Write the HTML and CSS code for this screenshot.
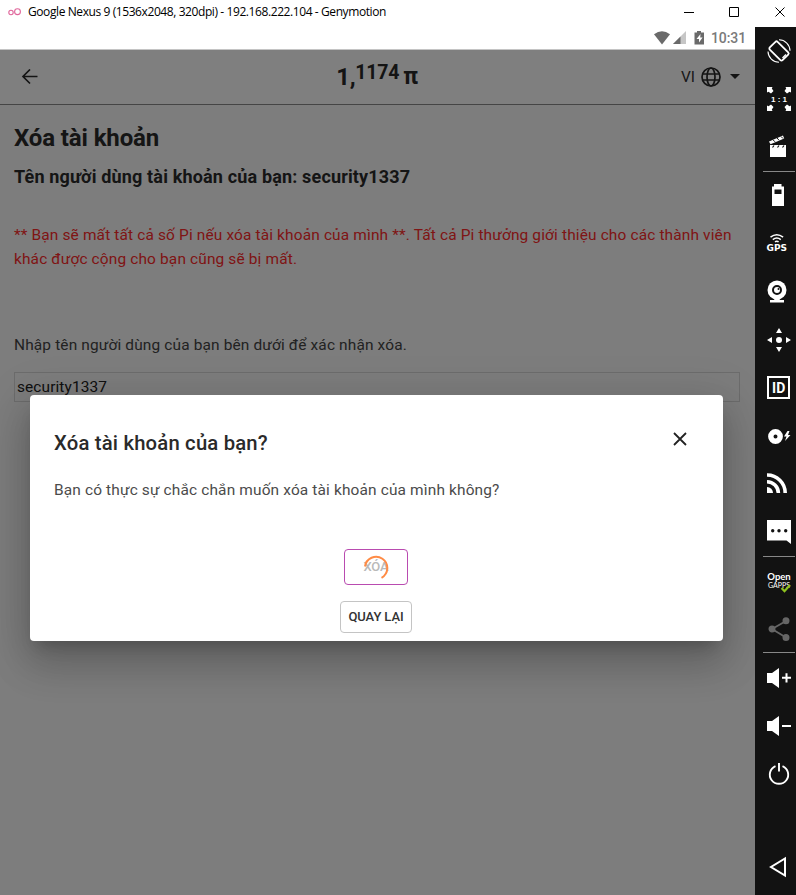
FILE: index.html
```html
<!DOCTYPE html>
<html lang="vi">
<head>
<meta charset="utf-8">
<title>Genymotion</title>
<link rel="stylesheet" href="styles.css">
</head>
<body>
<div class="window">
  <div class="titlebar">
    <svg class="logo" width="14" height="10" viewBox="0 0 14 10" fill="none" stroke="#e0669b" stroke-width="1.1"><circle cx="4" cy="5.5" r="2.2"/><circle cx="10.500" cy="4.700" r="2.900"/></svg>
    <span class="titlebar-text">Google Nexus 9 (1536x2048, 320dpi) - 192.168.222.104 - Genymotion</span>
    <svg class="winctl" width="104" height="12" viewBox="0 0 104 12" fill="none" stroke="#000" stroke-width="1"><path d="M0 6.500h10M45.500 1.500h9v9h-9zM91.500 1.500l9 9M100.500 1.500l-9 9"/></svg>
  </div>
  <div class="main">
    <div class="device">
      <div class="statusbar">
        <svg width="52" height="16" viewBox="0 0 52 16" fill="#6a6a6a"><path d="M0 4.300Q8 -1.800 16 4.300L8 14.500z"/><path d="M32 1v13H19z" fill="#c6c6c6"/><path d="M26.500 6.500V14H19z"/><path d="M43 1h4v1.500h3V14.500h-9.500V2.500H43z"/><path d="M46.500 4l-4 5h2.500v3.500l3.600-5h-2.400z" fill="#fff"/></svg>
        <span class="clock">10:31</span>
      </div>
      <div class="app">
        <header class="appbar">
          <svg class="back" width="18" height="16" viewBox="0 0 18 16" fill="none" stroke="#292929" stroke-width="1.700"><path d="M16.500 7.500H2M9 .5L2 7.500l7 7"/></svg>
          <div class="balance">1,<span class="frac">1174</span><span class="pi">π</span></div>
          <div class="lang"><span>VI</span>
            <svg width="20" height="20" viewBox="0 0 20 20" fill="none" stroke="#292929" stroke-width="1.700"><circle cx="10" cy="10" r="9"/><ellipse cx="10" cy="10" rx="4" ry="9"/><path d="M1.500 7h17M1.500 13h17"/></svg>
            <svg class="caret" width="10" height="5" viewBox="0 0 10 5"><path d="M0 0h10L5 5z" fill="#292929"/></svg>
          </div>
        </header>
        <main class="content">
          <h1>Xóa tài khoản</h1>
          <h2>Tên người dùng tài khoản của bạn: security1337</h2>
          <p class="warn">** Bạn sẽ mất tất cả số Pi nếu xóa tài khoản của mình **. Tất cả Pi thưởng giới thiệu cho các thành viên<br>khác được cộng cho bạn cũng sẽ bị mất.</p>
          <p class="prompt">Nhập tên người dùng của bạn bên dưới để xác nhận xóa.</p>
          <div class="field">security1337</div>
        </main>
        <div class="backdrop"></div>
        <section class="dialog">
          <div class="dialog-head">
            <h3>Xóa tài khoản của bạn?</h3>
            <svg width="14" height="14" viewBox="0 0 14 14" fill="none" stroke="#222" stroke-width="1.800"><path d="M1 1l12 12M13 1L1 13"/></svg>
          </div>
          <p class="question">Bạn có thực sự chắc chắn muốn xóa tài khoản của mình không?</p>
          <div class="actions">
            <div class="btn btn-delete">XÓA
              <svg class="spinner" width="26" height="26" viewBox="0 0 26 26" fill="none" stroke="#ff8b45" stroke-width="2"><path d="M2 11.500A11.200 11.200 0 1 1 18.500 22.800"/></svg>
            </div>
            <div class="btn btn-back">QUAY LẠI</div>
          </div>
        </section>
      </div>
    </div>
    <aside class="tools">
      <div class="tool"><svg viewBox="0 0 24 24" fill="none" stroke="#fff"><rect x="6.500" y="3" width="11" height="18" rx="1.500" stroke-width="1.800" transform="rotate(-45 12 12)"/><path d="M15.500 19l3.500-3.500" stroke-width="1.500"/><path d="M12 .8a11 11 0 0 1 11 11M1 12.500a11 11 0 0 0 11 10.700" stroke-width="1.100"/></svg></div>
      <div class="tool"><svg viewBox="0 0 24 24" fill="#fff"><path id="c" d="M0 0h5.500L4.800 1.500 6.500 4 4 6.500 1.500 4.800 0 5.500z"/><use href="#c" transform="matrix(-1 0 0 1 24 0)"/><use href="#c" transform="matrix(1 0 0 -1 0 24)"/><use href="#c" transform="matrix(-1 0 0 -1 24 24)"/><text x="12" y="14.800" text-anchor="middle" class="t-ratio">1 : 1</text></svg></div>
      <div class="tool"><svg viewBox="0 0 24 24" fill="#fff"><path d="M3 10h16v12H3z"/><path d="M2 6.500L16 .5l1.200 3L3.500 9.300z"/><path d="M6 4.800l2 2M10 3l2 2.200M14 1.500l2 2" stroke="#121212" stroke-width="1"/><path d="M7 10.500l-1.500 2M12 10.500l-1.500 2M17 10.500l-1.500 2" stroke="#121212" stroke-width="1.200"/></svg></div>
      <div class="rule"></div>
      <div class="tool"><svg viewBox="0 0 24 24"><path fill="#fff" fill-rule="evenodd" d="M7 0h7.500v2.500H17V22H5V2.500h2zM7.500 5.500V10h7V5.500z"/></svg></div>
      <div class="tool"><svg viewBox="0 0 24 24" fill="none" stroke="#fff" stroke-width="1.500"><path d="M3.500 5.200q6.300-5 12.600 0M5.800 7.700q4-3.200 8 0M8 9.900q1.800-1.300 3.600 0"/><text x="9.800" y="19.300" text-anchor="middle" class="t-gps">GPS</text></svg></div>
      <div class="tool"><svg viewBox="0 0 24 24" fill="#fff"><circle cx="10" cy="10" r="9.500"/><circle cx="10" cy="10" r="4" fill="none" stroke="#121212" stroke-width="2"/><circle cx="11.500" cy="9" r="1" fill="#121212"/><path d="M8 18h4l1 2h4v2.500H3V20h4z"/></svg></div>
      <div class="tool"><svg viewBox="0 0 24 24" fill="#fff"><circle cx="12" cy="12" r="3"/><path d="M12 0l3 5H9zM12 24l3-5H9zM0 12l5-3v6zM24 12l-5-3v6z"/></svg></div>
      <div class="tool"><svg viewBox="0 0 24 24" fill="none" stroke="#fff" stroke-width="2"><path d="M1 1h21v21H1z"/><text x="11.700" y="17" text-anchor="middle" class="t-id">ID</text></svg></div>
      <div class="tool"><svg viewBox="0 0 24 24" fill="#fff"><circle cx="8.500" cy="11.500" r="4.700" fill="none" stroke="#fff" stroke-width="5.400"/><path d="M20.500 6L17 11.500h2.500L18 16l5.500-6H21l1.500-4z"/></svg></div>
      <div class="tool"><svg viewBox="0 0 24 24" fill="none" stroke="#fff" stroke-width="3.600"><path d="M0 2A18 18 0 0 1 18.200 20M0 8.700A11.500 11.500 0 0 1 11.400 20"/><path d="M0 14a6 6 0 0 1 6 6H0z" fill="#fff" stroke="none"/></svg></div>
      <div class="tool"><svg viewBox="0 0 24 24" fill="#fff"><path d="M0-1h24v24l-4.500-3.500H0z"/><g fill="#121212"><circle cx="5.700" cy="9.700" r="1.700"/><circle cx="12" cy="9.700" r="1.700"/><circle cx="18.700" cy="9.700" r="1.700"/></g></svg></div>
      <div class="rule"></div>
      <div class="tool"><svg viewBox="0 0 24 24" fill="#fff"><text x="12" y="11" text-anchor="middle" class="t-open">Open</text><text x="12" y="19.200" text-anchor="middle" class="t-gapps">GAPPS</text><path d="M14.500 19l3 3.200 5.500-6.200" fill="none" stroke="#8fc31f" stroke-width="2.200"/></svg></div>
      <div class="tool"><svg viewBox="0 0 24 24" fill="#666" stroke="#666" stroke-width="1.800"><path d="M19 4L5 12l14 8.500" fill="none"/><circle cx="5" cy="12" r="2.600"/><circle cx="19" cy="3.800" r="2.600"/><circle cx="19" cy="20.500" r="2.600"/></svg></div>
      <div class="rule"></div>
      <div class="tool"><svg viewBox="0 0 24 24" fill="#fff"><path d="M0 7h5l7-5v20l-7-5H0zM15 10.800h3.500V7.300h2v3.500H24v2h-3.500v3.700h-2v-3.700H15z"/></svg></div>
      <div class="tool"><svg viewBox="0 0 24 24" fill="#fff"><path d="M0 7h5l7-5v20l-7-5H0zM15 11h9v2h-9z"/></svg></div>
      <div class="tool"><svg viewBox="0 0 24 24" fill="none" stroke="#fff" stroke-width="1.900"><path d="M8.500 4.100a9.200 9.200 0 1 0 7 0M12 1v8.500"/></svg></div>
      <div class="tool nav-back"><svg viewBox="0 0 24 24" fill="none" stroke="#fff" stroke-width="2"><path d="M18 3.500v17L4 12z"/></svg></div>
    </aside>
  </div>
</div>
</body>
</html>
```
FILE: styles.css
```css
* { box-sizing: border-box; }
body { margin: 0; font-family: Roboto, "Liberation Sans", sans-serif; background: #fff; }
h1, h2, h3, p { margin: 0; white-space: nowrap; }
svg { display: block; flex: none; }
.window { display: flex; flex-direction: column; width: 796px; height: 895px; overflow: hidden; }
.titlebar { display: flex; align-items: center; height: 27px; padding: 0 11px 4px 7px; }
.titlebar-text { margin-left: 7px; font: 12px "Open Sans", "Noto Sans", sans-serif; letter-spacing: -0.41px; white-space: nowrap; color: #000; }
.winctl { margin-left: auto; margin-right: -3px; }
.main { display: flex; flex: 1; min-height: 0; }
.device { display: flex; flex-direction: column; width: 755px; }
.statusbar { display: flex; justify-content: flex-end; align-items: center; gap: 5px; height: 23px; padding-right: 9px; border-bottom: 1px solid #c4c4c4; }
.clock { font-size: 14px; font-weight: 500; letter-spacing: -0.1px; color: #7a7a7a; }
.app { position: relative; flex: 1; overflow: hidden; background: #fafafa; }
.appbar { display: grid; grid-template-columns: 1fr auto 1fr; align-items: center; height: 55px; padding: 0 15px 1px 15px; border-bottom: 1px solid #8a8a8a; background: #fff; color: #292929; }
.back { margin-left: 6px; }
.balance { display: flex; align-items: center; height: 52px; margin-left: -1px; font-size: 24px; font-weight: 700; letter-spacing: -0.3px; }
.frac { margin-top: -9px; font-size: 19.500px; letter-spacing: -0.2px; }
.pi { margin-left: 4px; font-size: 23px; }
.lang { display: flex; justify-content: flex-end; align-items: center; gap: 6px; font-size: 15.450px; color: #333; }
.caret { margin-left: 3px; }
.content { padding: 17px 15px 0 14px; color: #2b2b2b; }
.content h1 { font-size: 24px; line-height: 32px; font-weight: 700; letter-spacing: -0.12px; }
.content h2 { margin-top: 9px; font-size: 18px; line-height: 28px; font-weight: 700; letter-spacing: 0.16px; }
.warn { margin-top: 32px; font-size: 15.450px; line-height: 24px; letter-spacing: 0.145px; color: #ff2a2a; }
.prompt { margin-top: 62px; font-size: 15.450px; line-height: 24px; letter-spacing: 0.145px; color: #444; }
.field { height: 30px; margin-top: 15px; padding-left: 2px; border: 1px solid #d8d8d8; font-size: 15.450px; line-height: 28px; letter-spacing: 0.1px; color: #222; }
.backdrop { position: absolute; inset: 0; background: rgba(0, 0, 0, .5); }
.dialog { position: absolute; left: 30px; top: 345px; width: 693px; height: 246px; padding: 32px 36px 0 24px; border-radius: 4px; background: #fff; box-shadow: 0 11px 15px -7px rgba(0,0,0,.2), 0 24px 38px 3px rgba(0,0,0,.14), 0 9px 46px 8px rgba(0,0,0,.12); }
.dialog-head { display: flex; justify-content: space-between; height: 32px; }
.dialog-head svg { margin-top: 5px; }
.dialog h3 { font-size: 20.300px; line-height: 32px; font-weight: 500; letter-spacing: 0.18px; color: #2a2a2a; }
.question { margin-top: 19px; font-size: 15.450px; line-height: 24px; letter-spacing: 0.145px; color: #4b4b4b; }
.actions { display: flex; flex-direction: column; align-items: center; gap: 16px; margin: 47px -11px 0 0; }
.btn { display: flex; justify-content: center; align-items: center; padding-bottom: 2px; border-radius: 4px; font-size: 13px; font-weight: 500; letter-spacing: -0.1px; }
.btn-delete { position: relative; width: 64px; height: 36px; border: 1px solid #b94bb0; color: #b9b9b9; }
.spinner { position: absolute; left: 18px; top: 5px; }
.btn-back { width: 72px; height: 32px; border: 1px solid #c4c4c4; color: #333; }
.tools { display: flex; flex-direction: column; flex: 1; padding: 0 0 4px 8px; background: #121212; }
.tool { display: flex; flex: none; align-items: center; height: 48.200px; padding-left: 4px; }
.tool svg { width: 24px; height: 24px; overflow: visible; }
.rule { flex: none; height: 1px; margin: -1px 1px 0 0; background: #888; }
.tools .nav-back { margin-top: auto; }
.tools text { fill: #fff; stroke: none; }
.tools .t-ratio { font: 700 8px "Liberation Sans", sans-serif; }
.tools .t-gps { font: 700 9px "DejaVu Sans", sans-serif; }
.tools .t-id { font: 700 14px Roboto, sans-serif; }
.tools .t-open { font: 700 9.500px/1 Lato, sans-serif; }
.tools .t-gapps { font: 400 7px/1 Lato, sans-serif; }
```
